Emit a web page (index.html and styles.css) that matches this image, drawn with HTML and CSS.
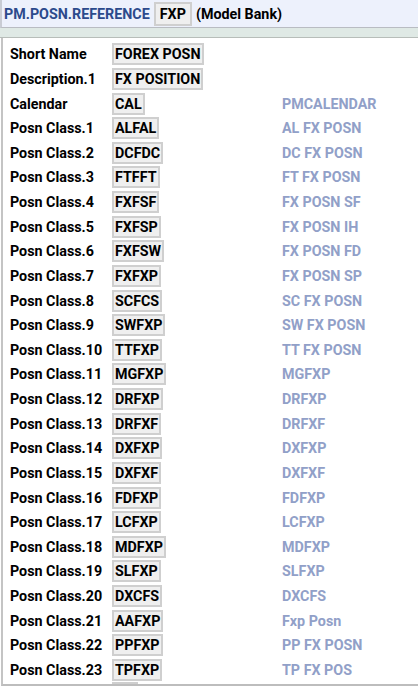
FILE: index.html
```html
<!DOCTYPE html>
<html lang="en">
<head>
  <meta charset="UTF-8">
  <title>PM.POSN.REFERENCE</title>
  <link rel="stylesheet" href="styles.css">
</head>
<body>
  <div class="header">
    <span class="app-name">PM.POSN.REFERENCE</span>
    <span class="field">FXP</span>
    <span class="company">(Model Bank)</span>
  </div>
  <div class="toolbar"></div>

  <div class="record">
    <div class="row"><span class="label">Short Name</span><span class="value"><span class="field">FOREX POSN</span></span><span class="enri"></span></div>
    <div class="row"><span class="label">Description.1</span><span class="value"><span class="field">FX POSITION</span></span><span class="enri"></span></div>
    <div class="row"><span class="label">Calendar</span><span class="value"><span class="field">CAL</span></span><span class="enri">PMCALENDAR</span></div>
    <div class="row"><span class="label">Posn Class.1</span><span class="value"><span class="field">ALFAL</span></span><span class="enri">AL FX POSN</span></div>
    <div class="row"><span class="label">Posn Class.2</span><span class="value"><span class="field">DCFDC</span></span><span class="enri">DC FX POSN</span></div>
    <div class="row"><span class="label">Posn Class.3</span><span class="value"><span class="field">FTFFT</span></span><span class="enri">FT FX POSN</span></div>
    <div class="row"><span class="label">Posn Class.4</span><span class="value"><span class="field">FXFSF</span></span><span class="enri">FX POSN SF</span></div>
    <div class="row"><span class="label">Posn Class.5</span><span class="value"><span class="field">FXFSP</span></span><span class="enri">FX POSN IH</span></div>
    <div class="row"><span class="label">Posn Class.6</span><span class="value"><span class="field">FXFSW</span></span><span class="enri">FX POSN FD</span></div>
    <div class="row"><span class="label">Posn Class.7</span><span class="value"><span class="field">FXFXP</span></span><span class="enri">FX POSN SP</span></div>
    <div class="row"><span class="label">Posn Class.8</span><span class="value"><span class="field">SCFCS</span></span><span class="enri">SC FX POSN</span></div>
    <div class="row"><span class="label">Posn Class.9</span><span class="value"><span class="field">SWFXP</span></span><span class="enri">SW FX POSN</span></div>
    <div class="row"><span class="label">Posn Class.10</span><span class="value"><span class="field">TTFXP</span></span><span class="enri">TT FX POSN</span></div>
    <div class="row"><span class="label">Posn Class.11</span><span class="value"><span class="field">MGFXP</span></span><span class="enri">MGFXP</span></div>
    <div class="row"><span class="label">Posn Class.12</span><span class="value"><span class="field">DRFXP</span></span><span class="enri">DRFXP</span></div>
    <div class="row"><span class="label">Posn Class.13</span><span class="value"><span class="field">DRFXF</span></span><span class="enri">DRFXF</span></div>
    <div class="row"><span class="label">Posn Class.14</span><span class="value"><span class="field">DXFXP</span></span><span class="enri">DXFXP</span></div>
    <div class="row"><span class="label">Posn Class.15</span><span class="value"><span class="field">DXFXF</span></span><span class="enri">DXFXF</span></div>
    <div class="row"><span class="label">Posn Class.16</span><span class="value"><span class="field">FDFXP</span></span><span class="enri">FDFXP</span></div>
    <div class="row"><span class="label">Posn Class.17</span><span class="value"><span class="field">LCFXP</span></span><span class="enri">LCFXP</span></div>
    <div class="row"><span class="label">Posn Class.18</span><span class="value"><span class="field">MDFXP</span></span><span class="enri">MDFXP</span></div>
    <div class="row"><span class="label">Posn Class.19</span><span class="value"><span class="field">SLFXP</span></span><span class="enri">SLFXP</span></div>
    <div class="row"><span class="label">Posn Class.20</span><span class="value"><span class="field">DXCFS</span></span><span class="enri">DXCFS</span></div>
    <div class="row"><span class="label">Posn Class.21</span><span class="value"><span class="field">AAFXP</span></span><span class="enri">Fxp Posn</span></div>
    <div class="row"><span class="label">Posn Class.22</span><span class="value"><span class="field">PPFXP</span></span><span class="enri">PP FX POSN</span></div>
    <div class="row"><span class="label">Posn Class.23</span><span class="value"><span class="field">TPFXP</span></span><span class="enri">TP FX POS</span></div>
    <div class="row"><span class="label"></span><span class="value"><span class="field field-empty"></span></span><span class="enri"></span></div>
  </div>
</body>
</html>
```

FILE: styles.css
```css
body {
  margin: 0;
  font-family: Roboto, "Liberation Sans", sans-serif;
  font-size: 14.3px;
  font-weight: bold;
  color: #000;
  background-color: #fff;
  height: 686px;
  overflow: hidden;
}
.header {
  height: 28px;
  background-color: #edf1fc;
  border-left: 2px solid #c9ccd4;
  border-bottom: 1px solid #b9bcc2;
  display: flex;
  align-items: center;
  gap: 4px;
  padding-left: 2px;
  box-sizing: border-box;
}
.app-name {
  color: #2c4a8c;
}
.header .company {
  margin-left: 0;
}
.toolbar {
  height: 9px;
  background-color: #dfe9e5;
  border-bottom: 1px solid #b7bdb9;
}
.field {
  display: inline-block;
  background-color: #efefef;
  border: 2px solid #cfcfcf;
  padding: 1px;
  line-height: 16px;
}
.header .field {
  padding: 2px 4px;
}
.field-empty {
  width: 20px;
  height: 16px;
}
.record {
  border-left: 2px solid #c4c4c4;
  border-bottom: 2px solid #bdbdbd;
  margin-left: 1px;
  padding-top: 4px;
  height: 648px;
  box-sizing: border-box;
  overflow: hidden;
}
.row {
  display: flex;
  align-items: center;
  height: 24.64px;
}
.label {
  width: 102px;
  padding-left: 7px;
  flex-shrink: 0;
}
.value {
  width: 170px;
  flex-shrink: 0;
}
.enri {
  color: #91a0c8;
}
```
